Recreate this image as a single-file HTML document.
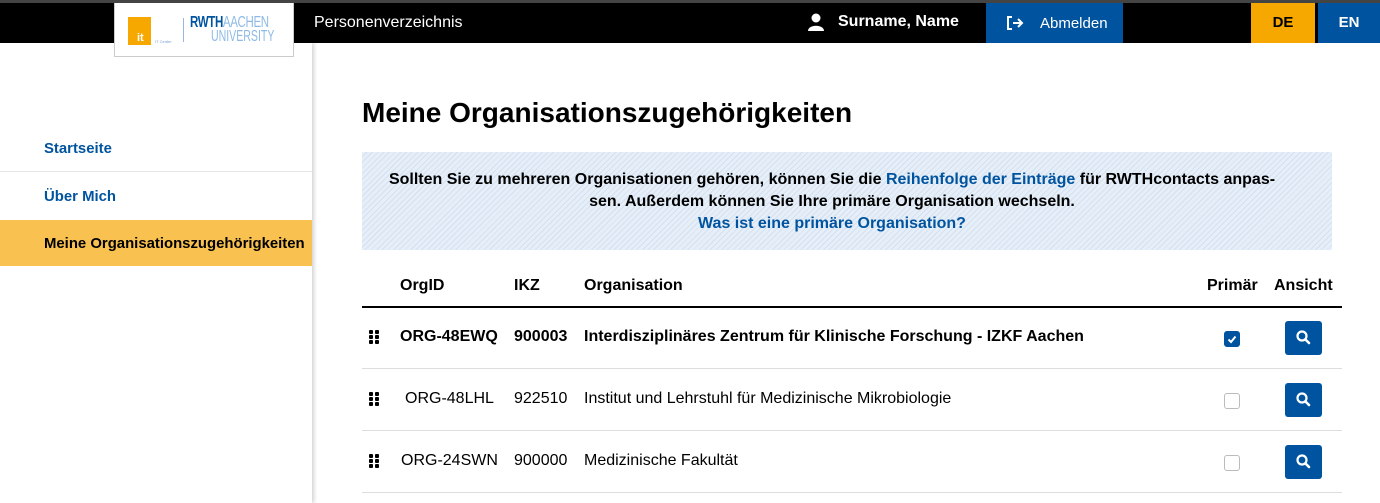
<!DOCTYPE html>
<html><head><meta charset="utf-8"><style>
*{margin:0;padding:0;box-sizing:border-box}
body{width:1380px;height:503px;overflow:hidden;background:#fff;font-family:"Liberation Sans",Arial,sans-serif;position:relative;color:#000}
.topbar{position:absolute;left:0;top:0;width:1380px;height:3px;background:#444}
.hdr{position:absolute;left:0;top:3px;width:1380px;height:40px;background:#000}
.logo{position:absolute;left:114px;top:3px;width:180px;height:54px;background:#fff;border:1px solid #ccc;border-top:none;z-index:3}
.sq{position:absolute;left:13px;top:14px;width:23px;height:28px;background:#f6a800}
.sq span{position:absolute;left:9px;bottom:1px;color:#fff;font-size:11px;font-weight:bold}
.itc{position:absolute;left:40px;top:36px;font-size:4px;color:#7a9fd0}
.sep{position:absolute;left:68px;top:15px;width:1px;height:24px;background:#9ab6dd}
.rw{position:absolute;left:75px;top:13px;font-size:16px;font-weight:bold;line-height:14px;color:#00549f;transform-origin:0 0;transform:scaleX(0.72);white-space:nowrap;letter-spacing:-0.5px}
.rw b{color:#8ebae5;font-weight:normal}
.uni{position:absolute;left:96px;top:27px;font-size:16px;line-height:14px;color:#8ebae5;transform-origin:0 0;transform:scaleX(0.66);white-space:nowrap}
.pv{position:absolute;left:314px;top:14px;color:#fff;font-size:16px}
.user{position:absolute;left:808px;top:13px;color:#fff;font-weight:bold;font-size:16px;display:flex;align-items:center;gap:14px}
.abm{position:absolute;left:986px;top:3px;width:137px;height:40px;background:#00549f;color:#fff;font-size:15px;display:flex;align-items:center;padding-left:20px;gap:16px}
.de{position:absolute;left:1251px;top:3px;width:64px;height:40px;background:#f6a800;font-weight:bold;font-size:15px;text-align:center;line-height:40px}
.en{position:absolute;left:1318px;top:3px;width:62px;height:40px;background:#00549f;color:#fff;font-weight:bold;font-size:15px;text-align:center;line-height:40px}
.side{position:absolute;left:0;top:43px;width:312px;height:460px;background:#fff;box-shadow:2px 0 4px rgba(0,0,0,.18);z-index:2}
.nav{position:absolute;left:0;width:312px;font-weight:bold;font-size:14.9px;padding-left:44px;white-space:nowrap}
.n1{top:81px;height:48px;line-height:50px;color:#00549f;border-bottom:1px solid #e5e5e5}
.n2{top:129px;height:48px;line-height:50px;color:#00549f}
.n3{top:177px;height:46px;line-height:48px;background:#f8c150;color:#000}
h1{position:absolute;left:362px;top:97px;font-size:28px;font-weight:bold}
.info{position:absolute;left:362px;top:152px;width:970px;height:98px;background:repeating-linear-gradient(135deg,#e6eef8 0,#e6eef8 3px,#d4e1f1 3px,#d4e1f1 4px);text-align:center;font-weight:bold;font-size:16px;line-height:22px;padding:17px 30px 0 0;white-space:nowrap}
.info a{color:#00549f;text-decoration:none}
.th{position:absolute;top:277px;font-weight:bold;font-size:16px}
.hl{position:absolute;left:362px;top:306px;width:980px;height:2px;background:#000}
.row{position:absolute;left:362px;width:980px;height:62px;border-bottom:1px solid #ddd;font-size:16px}
.row div{position:absolute;top:21px;white-space:nowrap}
.grip{left:7px!important;top:23px!important}
.cb{position:absolute;left:862px!important;top:24px!important;width:16px;height:16px;border:1px solid #bbb;border-radius:3px;background:#fff}
.cb.on{background:#00549f;border-color:#00549f}
.btn{position:absolute;left:923px!important;top:14px!important;width:37px;height:34px;background:#00549f;border-radius:3px}
</style></head><body>
<div class="topbar"></div>
<div class="hdr"></div>
<div class="logo"><div class="sq"><span>it</span></div><div class="itc">IT Center</div><div class="sep"></div><div class="rw">RWTH<b>AACHEN</b></div><div class="uni">UNIVERSITY</div></div>
<div class="pv">Personenverzeichnis</div>
<div class="user"><svg width="16" height="18" viewBox="0 0 16 18"><circle cx="8" cy="5" r="4.5" fill="#fff"/><path d="M0 18 C0 11 16 11 16 18Z" fill="#fff"/></svg>Surname, Name</div>
<div class="abm"><svg width="18" height="16" viewBox="0 0 18 16" fill="none" stroke="#fff" stroke-width="2"><path d="M6 2H2V14H6"/><path d="M7 8H16M12 4L16 8L12 12"/></svg>Abmelden</div>
<div class="de">DE</div><div class="en">EN</div>
<div class="side"><div class="nav n1">Startseite</div><div class="nav n2">Über Mich</div><div class="nav n3">Meine Organisationszugehörigkeiten</div></div>
<h1>Meine Organisationszugehörigkeiten</h1>
<div class="info">Sollten Sie zu mehreren Organisationen gehören, können Sie die <a>Reihenfolge der Einträge</a> für RWTHcontacts anpas-<br>sen. Außerdem können Sie Ihre primäre Organisation wechseln.<br><a>Was ist eine primäre Organisation?</a></div>
<div class="th" style="left:400px">OrgID</div><div class="th" style="left:514px">IKZ</div><div class="th" style="left:584px">Organisation</div><div class="th" style="left:1207px">Primär</div><div class="th" style="left:1274px">Ansicht</div>
<div class="hl"></div>
<div class="row" style="top:307px;font-weight:bold">
<div class="grip"><svg width="10" height="14"><g fill="#000"><rect x="0" y="0" width="4" height="4" rx="1"/><rect x="6" y="0" width="4" height="4" rx="1"/><rect x="0" y="5" width="4" height="4" rx="1"/><rect x="6" y="5" width="4" height="4" rx="1"/><rect x="0" y="10" width="4" height="4" rx="1"/><rect x="6" y="10" width="4" height="4" rx="1"/></g></svg></div>
<div style="left:38px">ORG-48EWQ</div><div style="left:152px">900003</div><div style="left:222px">Interdisziplinäres Zentrum für Klinische Forschung - IZKF Aachen</div>
<div class="cb on"><svg width="14" height="14" viewBox="0 0 14 14"><path d="M3.5 7.5L6 10L10.5 4.5" stroke="#fff" stroke-width="2" fill="none"/></svg></div>
<div class="btn"><svg width="37" height="34" viewBox="0 0 37 34"><circle cx="17" cy="15" r="4.5" stroke="#fff" stroke-width="2.2" fill="none"/><path d="M20.5 18.5L24 22" stroke="#fff" stroke-width="2.6" stroke-linecap="round"/></svg></div>
</div>
<div class="row" style="top:369px">
<div class="grip"><svg width="10" height="14"><g fill="#000"><rect x="0" y="0" width="4" height="4" rx="1"/><rect x="6" y="0" width="4" height="4" rx="1"/><rect x="0" y="5" width="4" height="4" rx="1"/><rect x="6" y="5" width="4" height="4" rx="1"/><rect x="0" y="10" width="4" height="4" rx="1"/><rect x="6" y="10" width="4" height="4" rx="1"/></g></svg></div>
<div style="left:43px">ORG-48LHL</div><div style="left:152px">922510</div><div style="left:222px">Institut und Lehrstuhl für Medizinische Mikrobiologie</div>
<div class="cb"></div>
<div class="btn"><svg width="37" height="34" viewBox="0 0 37 34"><circle cx="17" cy="15" r="4.5" stroke="#fff" stroke-width="2.2" fill="none"/><path d="M20.5 18.5L24 22" stroke="#fff" stroke-width="2.6" stroke-linecap="round"/></svg></div>
</div>
<div class="row" style="top:431px">
<div class="grip"><svg width="10" height="14"><g fill="#000"><rect x="0" y="0" width="4" height="4" rx="1"/><rect x="6" y="0" width="4" height="4" rx="1"/><rect x="0" y="5" width="4" height="4" rx="1"/><rect x="6" y="5" width="4" height="4" rx="1"/><rect x="0" y="10" width="4" height="4" rx="1"/><rect x="6" y="10" width="4" height="4" rx="1"/></g></svg></div>
<div style="left:39px">ORG-24SWN</div><div style="left:152px">900000</div><div style="left:222px">Medizinische Fakultät</div>
<div class="cb"></div>
<div class="btn"><svg width="37" height="34" viewBox="0 0 37 34"><circle cx="17" cy="15" r="4.5" stroke="#fff" stroke-width="2.2" fill="none"/><path d="M20.5 18.5L24 22" stroke="#fff" stroke-width="2.6" stroke-linecap="round"/></svg></div>
</div>
</body></html>
